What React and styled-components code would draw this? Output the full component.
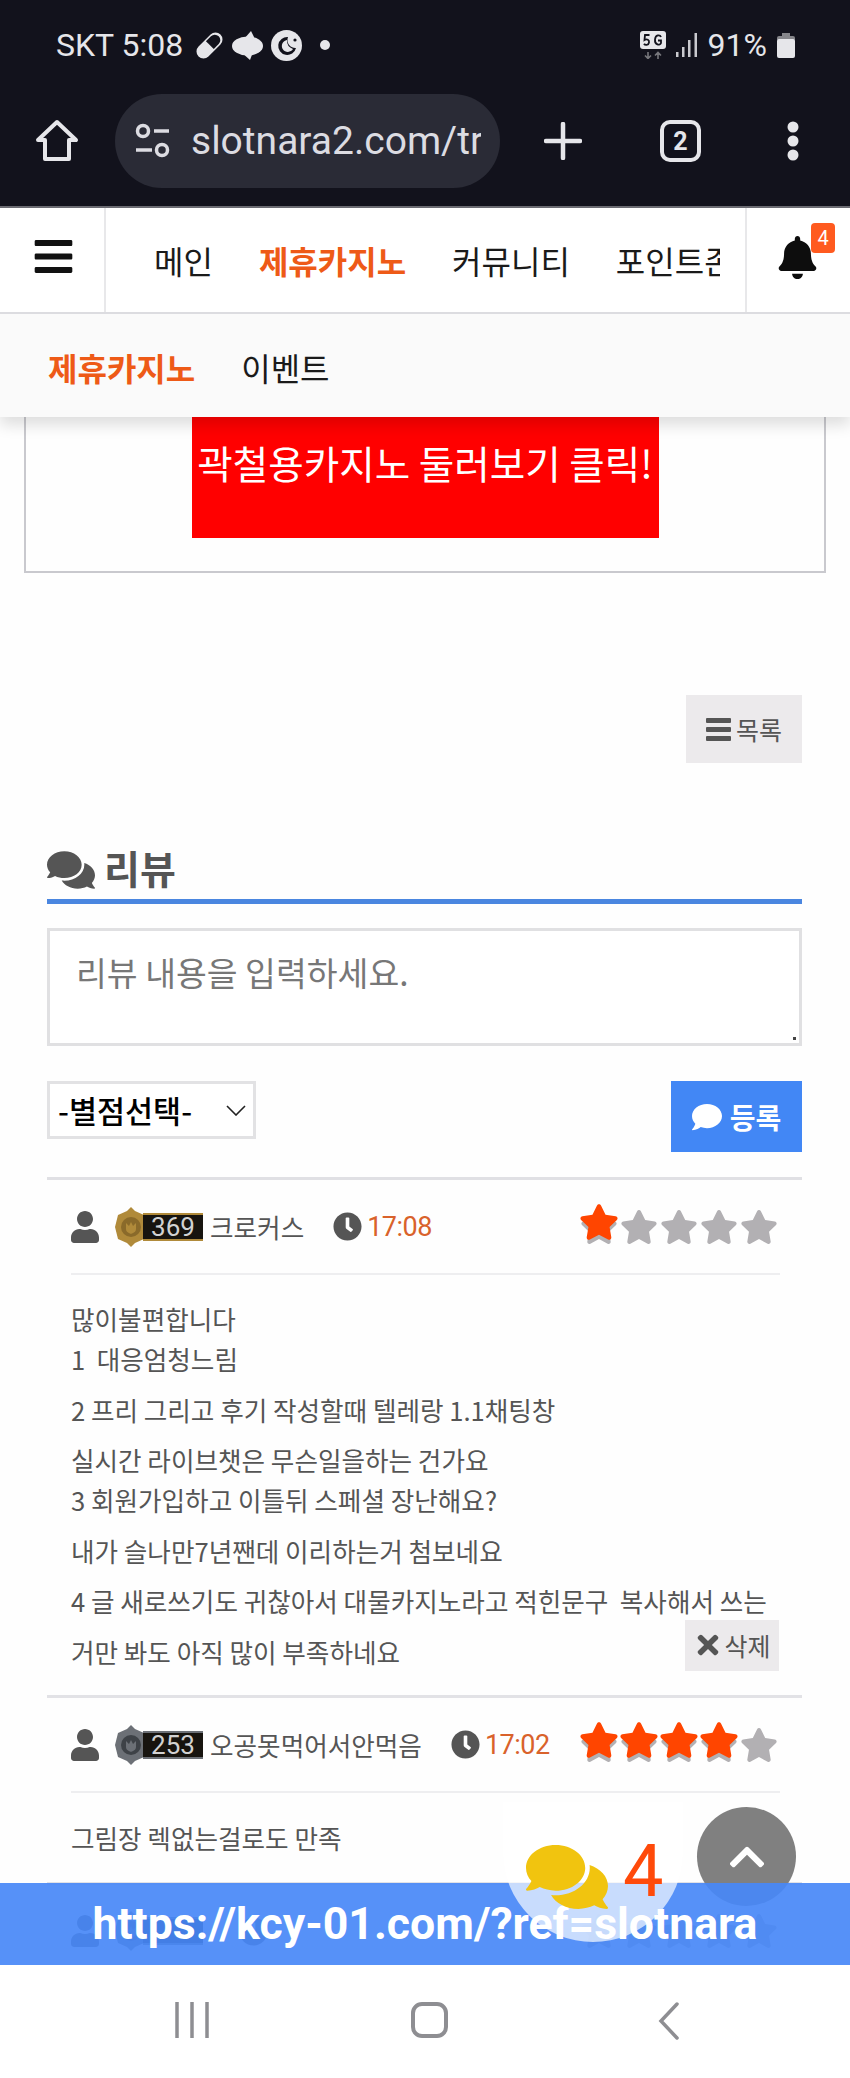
import React from 'react'
import styled, { createGlobalStyle } from 'styled-components'
import { FaBars, FaBell, FaClock, FaComment, FaComments, FaChevronUp, FaStar, FaTimes, FaUser } from 'react-icons/fa'

const KR = `"Noto Sans CJK KR", "Noto Sans", sans-serif`
const LATIN = `Roboto, "Noto Sans CJK KR", sans-serif`

const GlobalStyle = createGlobalStyle`
  html, body { margin: 0; padding: 0; background: #fff; }
  * { box-sizing: border-box; }
`

const Phone = styled.div`
  width: 850px;
  height: 2078px;
  display: flex;
  flex-direction: column;
  overflow: hidden;
  font-family: ${KR};
`

const StatusBar = styled.div`
  height: 76px;
  flex: none;
  background: #12121c;
  color: #e6e6ea;
  display: flex;
  align-items: center;
  padding: 14px 55px 0 56px;
  font-family: ${LATIN};
  font-size: 32px;
`

const StatusGroup = styled.div`
  display: flex;
  align-items: center;
  gap: ${p => p.$gap || 8}px;
  margin-left: ${p => (p.$right ? 'auto' : p.$left || 0)}${p => (p.$right ? '' : 'px')};
`

const BrowserBar = styled.div`
  height: 132px;
  flex: none;
  background: #12121c;
  border-bottom: 2px solid #6b6b72;
  display: flex;
  align-items: center;
  padding: 0 0 0 35px;
  color: #e6e6ea;
`

const UrlPill = styled.div`
  width: 385px;
  height: 94px;
  margin-left: 36px;
  padding: 0 19px 0 20px;
  border-radius: 47px;
  background: #2a2b36;
  display: flex;
  align-items: center;
  gap: 21px;
`

const UrlText = styled.div`
  flex: 1;
  overflow: hidden;
  white-space: nowrap;
  font-family: ${LATIN};
  font-size: 39px;
  color: #dcdce2;
`

const BarButton = styled.div`
  display: flex;
  align-items: center;
  justify-content: center;
  margin-left: ${p => p.$left}px;
`

const TabCount = styled.div`
  width: 41px;
  height: 42px;
  border: 4px solid #e6e6ea;
  border-radius: 10px;
  display: flex;
  align-items: center;
  justify-content: center;
  font-family: ${LATIN};
  font-size: 25px;
  font-weight: 700;
`

const Viewport = styled.div`
  position: relative;
  flex: 1;
  overflow: hidden;
  background: #fefefe;
`

const TopNav = styled.nav`
  height: 106px;
  display: flex;
  align-items: center;
  background: #fff;
  border-bottom: 2px solid #dcdce0;
  position: relative;
  z-index: 3;
`

const MenuCell = styled.div`
  width: 106px;
  height: 100%;
  flex: none;
  display: flex;
  align-items: center;
  justify-content: center;
  padding: 0 0 8px 2px;
  border-right: 2px solid #e8e8ea;
  color: #111;
`

const NavTrack = styled.div`
  width: 614px;
  flex: none;
  display: flex;
  gap: 46px;
  padding-left: 48px;
  overflow: hidden;
  white-space: nowrap;
`

const NavLink = styled.span`
  flex: none;
  font-size: 32px;
  line-height: 44px;
  font-weight: ${p => (p.$active ? 700 : 400)};
  color: ${p => (p.$active ? '#ee5a17' : '#1a1a1a')};
`

const BellCell = styled.div`
  position: relative;
  width: 105px;
  height: 100%;
  margin-left: auto;
  border-left: 2px solid #e8e8ea;
  display: flex;
  justify-content: center;
  padding: 28px 2px 0 0;
  color: #0d0d0d;
`

const BellBadge = styled.span`
  position: absolute;
  top: 15px;
  left: 64px;
  width: 24px;
  height: 30px;
  border-radius: 4px;
  background: #ff5a1f;
  color: #fff;
  font-family: ${LATIN};
  font-size: 20px;
  line-height: 30px;
  text-align: center;
`

const SubNav = styled.nav`
  height: 103px;
  display: flex;
  align-items: center;
  gap: 46px;
  padding: 3px 0 0 48px;
  background: #fafafa;
  box-shadow: 0 8px 14px rgba(0, 0, 0, 0.13);
  position: relative;
  z-index: 2;
`

const AdBox = styled.div`
  margin: -10px 24px 0 24px;
  padding-bottom: 33px;
  border: 2px solid #c9c9ce;
  border-top: 0;
  display: flex;
  justify-content: center;
`

const AdButton = styled.div`
  width: 467px;
  height: 131px;
  padding-bottom: 22px;
  background: #ff0000;
  color: #fff;
  font-size: 38.6px;
  display: flex;
  align-items: center;
  justify-content: center;
  white-space: nowrap;
`

const Content = styled.div`
  padding: 0 48px 0 47px;
`

const ListRow = styled.div`
  display: flex;
  justify-content: flex-end;
  margin-top: 122px;
`

const GreyButton = styled.div`
  width: ${p => p.$w}px;
  height: ${p => p.$h}px;
  flex: none;
  background: #eceaec;
  color: #555;
  font-size: 25px;
  display: flex;
  align-items: center;
  justify-content: center;
  gap: ${p => p.$gap}px;
`

const ReviewTitle = styled.h2`
  margin: 85px 0 0;
  height: 51px;
  padding-bottom: 8px;
  display: flex;
  align-items: center;
  gap: 9px;
  font-size: 39px;
  font-weight: 700;
  line-height: 46px;
  color: #555;
`

const TitleText = styled.span`
  margin-bottom: 6px;
`

const TitleRule = styled.div`
  height: 5px;
  background: #4a86e0;
`

const ReviewInput = styled.textarea`
  display: block;
  width: 100%;
  height: 118px;
  margin-top: 24px;
  padding: 19px 26px;
  border: 3px solid #e0e0e2;
  background: #fff;
  font-family: ${KR};
  font-size: 33.5px;
  line-height: 44px;
  outline: none;
  &::placeholder { color: #777; }
  &::-webkit-resizer {
    background: radial-gradient(circle at 70% 70%, #444 0 1.5px, transparent 2px);
  }
`

const FormRow = styled.div`
  display: flex;
  justify-content: space-between;
  align-items: flex-start;
  margin-top: 35px;
`

const SelectWrap = styled.div`
  position: relative;
  width: 209px;
  height: 58px;
  svg {
    position: absolute;
    right: 10px;
    top: 24px;
    pointer-events: none;
  }
`

const RatingSelect = styled.select`
  width: 100%;
  height: 100%;
  padding-left: 8px;
  border: 3px solid #e2e2e4;
  border-radius: 0;
  background: #fff;
  color: #000;
  font-family: ${KR};
  font-size: 30.5px;
  font-weight: 500;
  appearance: none;
  outline: none;
`

const SubmitButton = styled.div`
  width: 131px;
  height: 71px;
  background: #4287f5;
  color: #fff;
  font-size: 28px;
  font-weight: 700;
  display: flex;
  align-items: center;
  justify-content: center;
  gap: 8px;
`

const ReviewList = styled.div`
  margin-top: 25px;
  border-top: 3px solid #e0e0e4;
`

const ReviewItem = styled.article`
  padding: 0 22px 0 24px;
  border-bottom: 3px solid #e2e2e6;
`

const Meta = styled.div`
  height: 95px;
  display: flex;
  align-items: center;
  border-bottom: 2px solid #eeeef0;
  color: #555;
  font-size: 25.6px;
`

const UserIcon = styled(FaUser)`
  margin-left: -2px;
  flex: none;
`

const LevelBadge = styled.div`
  display: flex;
  align-items: center;
  margin-left: 14px;
  flex: none;
`

const LevelNumber = styled.span`
  width: 60px;
  height: 28px;
  margin-left: -4px;
  background: #17140f;
  border-top: 2px solid ${p => p.$tone};
  border-bottom: 2px solid ${p => p.$tone};
  color: #d2d2d2;
  font-family: ${LATIN};
  font-size: 26px;
  line-height: 24px;
  text-align: center;
`

const UserName = styled.span`
  margin-left: 7px;
  white-space: nowrap;
`

const TimeStamp = styled.span`
  display: flex;
  align-items: center;
  gap: 5px;
  margin-left: 29px;
  font-family: ${LATIN};
  font-size: 27px;
  letter-spacing: -0.5px;
  color: #d9622b;
  svg { color: #555; }
`

const Stars = styled.div`
  display: flex;
  margin-left: auto;
  padding-right: 1px;
`

const StarSlot = styled.span`
  position: relative;
  width: 40px;
  height: 38px;
  display: flex;
  justify-content: center;
  color: #b2b0b3;
`

const StarFill = styled.span`
  position: absolute;
  left: 0;
  top: -6px;
  color: #ff4500;
  display: flex;
`

const ReviewBody = styled.div`
  padding: ${p => p.$top}px 0 13px;
  color: #555;
  font-size: 25.6px;
  line-height: 40px;
`

const Para = styled.p`
  margin: 0 0 10.5px;
`

const LastRow = styled.div`
  display: flex;
  justify-content: space-between;
  margin-bottom: 10.5px;
`

const DeleteSlot = styled.div`
  margin: -12px 1px 0 0;
  height: 51px;
`

const Banner = styled.div`
  position: absolute;
  left: 0;
  right: 0;
  bottom: 0;
  height: 82px;
  background: rgba(72, 136, 247, 0.92);
  color: #fff;
  font-family: ${LATIN};
  font-size: 44.6px;
  font-weight: 700;
  display: flex;
  align-items: center;
  justify-content: center;
  white-space: nowrap;
  z-index: 4;
`

const ChatBubble = styled.div`
  position: absolute;
  right: 167px;
  bottom: 23px;
  width: 180px;
  height: 140px;
  border-radius: 0 0 90px 90px;
  background: rgba(255, 255, 255, 0.68);
  display: flex;
  align-items: flex-start;
  gap: 15px;
  padding: 34px 0 0 23px;
  z-index: 5;
  color: #f1c40f;
`

const ChatCount = styled.span`
  font-family: ${LATIN};
  font-size: 72px;
  font-weight: 400;
  line-height: 72px;
  color: #ff4a0a;
`

const TopButton = styled.div`
  position: absolute;
  right: 54px;
  bottom: 59px;
  width: 99px;
  height: 99px;
  border-radius: 50%;
  background: #808080;
  color: #fff;
  display: flex;
  align-items: center;
  justify-content: center;
  z-index: 3;
`

const SystemNav = styled.div`
  height: 113px;
  flex: none;
  background: #fff;
  display: flex;
  align-items: flex-start;
  padding-top: 37px;
`

const SystemKey = styled.div`
  flex: none;
  margin-left: ${p => p.$left}px;
  display: flex;
`

const HomeIcon = () => (
  <svg width="44" height="44" viewBox="0 0 44 44" fill="none" stroke="#e6e6ea" strokeWidth="4" strokeLinejoin="round">
    <path d="M22 3 L41 21 H34 V40 H10 V21 H3 Z" />
  </svg>
)

const TuneIcon = () => (
  <svg width="35" height="38" viewBox="0 0 35 38" fill="none" stroke="#dcdce2" strokeWidth="3.5">
    <circle cx="8" cy="9" r="5.5" />
    <path d="M19 9 H34 M1 28 H17" />
    <circle cx="27" cy="28" r="5.5" />
  </svg>
)

const PlusIcon = () => (
  <svg width="38" height="38" viewBox="0 0 38 38" stroke="#e6e6ea" strokeWidth="4.5" strokeLinecap="round">
    <path d="M19 2 V36 M2 19 H36" />
  </svg>
)

const DotsIcon = () => (
  <svg width="12" height="40" viewBox="0 0 12 40" fill="#e6e6ea">
    <circle cx="6" cy="6" r="5.5" />
    <circle cx="6" cy="20" r="5.5" />
    <circle cx="6" cy="34" r="5.5" />
  </svg>
)

const PillIcon = () => (
  <svg width="29" height="29" viewBox="0 0 29 29">
    <g transform="rotate(-45 14.5 14.5)">
      <rect x="-1" y="7.5" width="31" height="14" rx="7" fill="#e6e6ea" />
      <path d="M15 9 H22 A5.5 5.5 0 0 1 22 20 H15 Z" fill="#12121c" />
    </g>
  </svg>
)

const SwirlIcon = () => (
  <svg width="31" height="29" viewBox="0 0 31 29" fill="#e6e6ea">
    <ellipse cx="15.5" cy="15" rx="15.5" ry="9.5" />
    <path d="M12 8 L19 0 L23 8 Z" />
    <path d="M9 21 L18 29 L21 21 Z" />
  </svg>
)

const MoonIcon = () => (
  <svg width="31" height="31" viewBox="0 0 31 31">
    <circle cx="15.5" cy="15.5" r="15.5" fill="#e6e6ea" />
    <path d="M17 7 A9 9 0 1 0 25 18 A8 8 0 0 1 17 7 Z" fill="#12121c" />
    <path d="M16 10 A6 6 0 1 0 22 19 A9 9 0 0 1 16 10 Z" fill="#e6e6ea" />
    <circle cx="24" cy="10" r="1.6" fill="#12121c" />
  </svg>
)

const FiveGIcon = () => (
  <svg width="26" height="28" viewBox="0 0 26 28">
    <rect width="26" height="18" rx="3" fill="#e6e6ea" />
    <path d="M8 21 V27 M5 24.5 L8 27.5 L11 24.5 M18 28 V22 M15 24.5 L18 21.5 L21 24.5" stroke="#77777c" strokeWidth="1.6" fill="none" />
    <path d="M9.5 4 H5 L4.5 9 C7 7.5 9.5 9 9 11.5 C8.5 14.5 5 14.5 4 12.8 M21 6 C20 3.5 15.5 3.5 15 8.5 C14.5 14 20 15 21 12 V9.5 H18" stroke="#12121c" strokeWidth="1.8" fill="none" />
  </svg>
)

const SignalIcon = () => (
  <svg width="22" height="24" viewBox="0 0 22 24" fill="#c9c9ce">
    <rect x="0" y="19" width="2.5" height="5" />
    <rect x="6" y="14" width="2.5" height="10" />
    <rect x="12" y="7" width="2.5" height="17" />
    <rect x="18.5" y="0" width="2.5" height="24" />
  </svg>
)

const BatteryIcon = () => (
  <svg width="18" height="25" viewBox="0 0 18 25" fill="#e6e6ea">
    <rect x="5" y="0" width="8" height="3" fill="#85858a" />
    <rect x="0" y="3" width="18" height="5" rx="2" fill="#85858a" />
    <rect x="0" y="6" width="18" height="19" rx="2" />
  </svg>
)

const ListLinesIcon = () => (
  <svg width="25" height="23" viewBox="0 0 25 23" fill="#555">
    <rect y="0" width="25" height="5" rx="1" />
    <rect y="9" width="25" height="5" rx="1" />
    <rect y="18" width="25" height="5" rx="1" />
  </svg>
)

const Hexagon = ({ tone, dark }) => (
  <svg width="32" height="40" viewBox="0 0 32 40">
    <path d="M16 0 L20 4 L29 8 L32 20 L29 32 L20 36 L16 40 L12 36 L3 32 L0 20 L3 8 L12 4 Z" fill={tone} />
    <circle cx="16" cy="20" r="10" fill={dark} />
    <path d="M11 16 V22 C11 25 14 26 16 27 C18 26 21 25 21 22 V16 L18 19 L16 15 L14 19 Z" fill={tone} />
  </svg>
)

const Level = ({ value, tone, dark }) => (
  <LevelBadge>
    <Hexagon tone={tone} dark={dark} />
    <LevelNumber $tone={tone}>{value}</LevelNumber>
  </LevelBadge>
)

const Rating = ({ value }) => (
  <Stars>
    {[1, 2, 3, 4, 5].map(n => (
      <StarSlot key={n}>
        <FaStar size={38} />
        {n <= value && (
          <StarFill>
            <FaStar size={40} />
          </StarFill>
        )}
      </StarSlot>
    ))}
  </Stars>
)

const reviews = [
  { id: 1, name: '크로커스', level: '369', tone: '#b08a3a', dark: '#8a6a2a', time: '17:08', rating: 1 },
  { id: 2, name: '오공못먹어서안먹음', level: '253', tone: '#6c7076', dark: '#3e4247', time: '17:02', rating: 4 },
  { id: 3, name: '', level: '', tone: '#6c7076', dark: '#3e4247', time: '', rating: 0 }
]

const ReviewMeta = ({ review }) => (
  <Meta>
    <UserIcon size={32} />
    <Level value={review.level} tone={review.tone} dark={review.dark} />
    <UserName>{review.name}</UserName>
    <TimeStamp>
      <FaClock size={29} />
      {review.time}
    </TimeStamp>
    <Rating value={review.rating} />
  </Meta>
)

const App = () => {
  return (
    <Phone>
      <GlobalStyle />
      <StatusBar>
        <StatusGroup $gap={8}>
          <span>SKT 5:08</span>
          <StatusGroup $gap={8} $left={4}>
            <PillIcon />
            <SwirlIcon />
            <MoonIcon />
          </StatusGroup>
          <StatusGroup $left={10}>
            <svg width="10" height="10" viewBox="0 0 10 10">
              <circle cx="5" cy="5" r="5" fill="#e6e6ea" />
            </svg>
          </StatusGroup>
        </StatusGroup>
        <StatusGroup $right $gap={10}>
          <FiveGIcon />
          <SignalIcon />
          <span>91%</span>
          <BatteryIcon />
        </StatusGroup>
      </StatusBar>

      <BrowserBar>
        <HomeIcon />
        <UrlPill>
          <TuneIcon />
          <UrlText>slotnara2.com/tr</UrlText>
        </UrlPill>
        <BarButton $left={44}><PlusIcon /></BarButton>
        <BarButton $left={78}><TabCount>2</TabCount></BarButton>
        <BarButton $left={86}><DotsIcon /></BarButton>
      </BrowserBar>

      <Viewport>
        <TopNav>
          <MenuCell><FaBars size={43} /></MenuCell>
          <NavTrack>
            <NavLink>메인</NavLink>
            <NavLink $active>제휴카지노</NavLink>
            <NavLink>커뮤니티</NavLink>
            <NavLink>포인트존</NavLink>
          </NavTrack>
          <BellCell>
            <FaBell size={43} />
            <BellBadge>4</BellBadge>
          </BellCell>
        </TopNav>
        <SubNav>
          <NavLink $active>제휴카지노</NavLink>
          <NavLink>이벤트</NavLink>
        </SubNav>

        <AdBox>
          <AdButton>곽철용카지노 둘러보기 클릭!</AdButton>
        </AdBox>

        <Content>
          <ListRow>
            <GreyButton $w={116} $h={68} $gap={5}>
              <ListLinesIcon />
              목록
            </GreyButton>
          </ListRow>

          <ReviewTitle>
            <FaComments size={48} />
            <TitleText>리뷰</TitleText>
          </ReviewTitle>
          <TitleRule />
          <ReviewInput placeholder="리뷰 내용을 입력하세요." />
          <FormRow>
            <SelectWrap>
              <RatingSelect defaultValue="">
                <option value="">-별점선택-</option>
              </RatingSelect>
              <svg width="20" height="11" viewBox="0 0 20 11" fill="none" stroke="#222" strokeWidth="1.6">
                <path d="M1 1 L10 10 L19 1" />
              </svg>
            </SelectWrap>
            <SubmitButton>
              <FaComment size={30} />
              등록
            </SubmitButton>
          </FormRow>

          <ReviewList>
            <ReviewItem>
              <ReviewMeta review={reviews[0]} />
              <ReviewBody $top={24}>
                <Para>많이불편합니다<br />1&nbsp; 대응엄청느림</Para>
                <Para>2 프리 그리고 후기 작성할때 텔레랑 1.1채팅창</Para>
                <Para>실시간 라이브챗은 무슨일을하는 건가요<br />3 회원가입하고 이틀뒤 스페셜 장난해요?</Para>
                <Para>내가 슬나만7년짼데 이리하는거 첨보네요</Para>
                <Para>4 글 새로쓰기도 귀찮아서 대물카지노라고 적힌문구&nbsp; 복사해서 쓰는</Para>
                <LastRow>
                  <span>거만 봐도 아직 많이 부족하네요</span>
                  <DeleteSlot>
                    <GreyButton $w={94} $h={51} $gap={1}>
                      <FaTimes size={30} />
                      삭제
                    </GreyButton>
                  </DeleteSlot>
                </LastRow>
              </ReviewBody>
            </ReviewItem>
            <ReviewItem>
              <ReviewMeta review={reviews[1]} />
              <ReviewBody $top={25}>
                <Para>그림장 렉없는걸로도 만족</Para>
              </ReviewBody>
            </ReviewItem>
            <ReviewItem>
              <ReviewMeta review={reviews[2]} />
            </ReviewItem>
          </ReviewList>
        </Content>

        <TopButton><FaChevronUp size={40} /></TopButton>
        <Banner>https://kcy-01.com/?ref=slotnara</Banner>
        <ChatBubble>
          <FaComments size={82} />
          <ChatCount>4</ChatCount>
        </ChatBubble>
      </Viewport>

      <SystemNav>
        <SystemKey $left={175}>
          <svg width="34" height="36" viewBox="0 0 34 36" stroke="#8e8e92" strokeWidth="3.5">
            <path d="M2 0 V36 M17 0 V36 M32 0 V36" />
          </svg>
        </SystemKey>
        <SystemKey $left={202}>
          <svg width="37" height="36" viewBox="0 0 37 36" fill="none" stroke="#8e8e92" strokeWidth="4">
            <rect x="2" y="2" width="33" height="32" rx="9" />
          </svg>
        </SystemKey>
        <SystemKey $left={210}>
          <svg width="22" height="38" viewBox="0 0 22 38" fill="none" stroke="#8e8e92" strokeWidth="3.5" strokeLinecap="round">
            <path d="M19 2 L3 19 L19 36" />
          </svg>
        </SystemKey>
      </SystemNav>
    </Phone>
  )
}

export default App
